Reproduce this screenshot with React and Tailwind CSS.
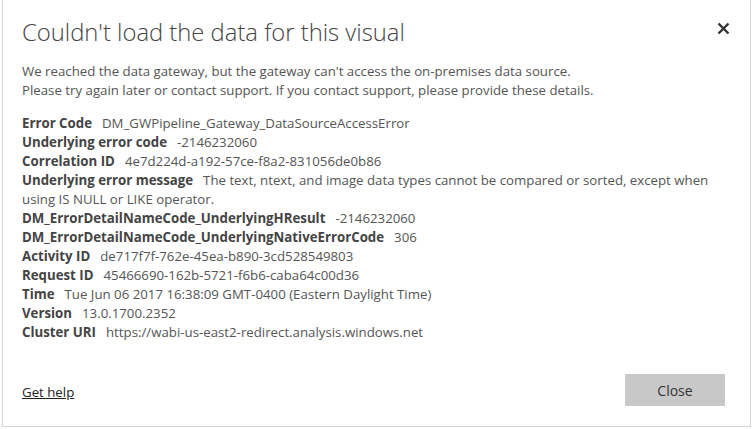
import React from 'react';

const details = [
  ['Error Code', 'DM_GWPipeline_Gateway_DataSourceAccessError'],
  ['Underlying error code', '-2146232060'],
  ['Correlation ID', '4e7d224d-a192-57ce-f8a2-831056de0b86'],
  [
    'Underlying error message',
    'The text, ntext, and image data types cannot be compared or sorted, except when using IS NULL or LIKE operator.',
  ],
  ['DM_ErrorDetailNameCode_UnderlyingHResult', '-2146232060'],
  ['DM_ErrorDetailNameCode_UnderlyingNativeErrorCode', '306'],
  ['Activity ID', 'de717f7f-762e-45ea-b890-3cd528549803'],
  ['Request ID', '45466690-162b-5721-f6b6-caba64c00d36'],
  ['Time', 'Tue Jun 06 2017 16:38:09 GMT-0400 (Eastern Daylight Time)'],
  ['Version', '13.0.1700.2352'],
  ['Cluster URI', 'https://wabi-us-east2-redirect.analysis.windows.net'],
];

const App = () => {
  return (
    <div className="w-[753px] h-[429px] bg-white font-['Open_Sans',sans-serif]">
      <div className="ml-[2px] w-[749px] h-[427px] border-x border-b border-[#d4d4d4] flex flex-col pl-[19px] pr-[25px]">
        {/* Header */}
        <div className="flex items-start justify-between pt-[15px] -mr-[5px]">
          <h1 className="text-[23.8px] leading-[34px] font-light text-[#444]">
            Couldn't load the data for this visual
          </h1>
          <button className="mt-[7px] text-[#333]">
            <svg width="13" height="13" viewBox="0 0 13 13">
              <path d="M1.5 1.5 L11.5 11.5 M11.5 1.5 L1.5 11.5" stroke="currentColor" strokeWidth="2.4" />
            </svg>
          </button>
        </div>

        <p className="mt-[13px] text-[13.25px] leading-[19px] text-[#555]">
          We reached the data gateway, but the gateway can't access the on-premises data source.
          <br />
          Please try again later or contact support. If you contact support, please provide these details.
        </p>

        {/* Details */}
        <div className="mt-[14px] text-[13.25px] leading-[19px] text-[#555] pr-[10px]">
          {details.map(([label, value]) => (
            <div key={label}>
              <span className="font-bold text-[#444]">{label}</span>
              <span className="ml-[10px]">{value}</span>
            </div>
          ))}
        </div>

        {/* Footer */}
        <div className="mt-auto mb-[20px] flex items-center justify-between">
          <a href="#" className="mt-[6px] text-[13.25px] text-[#222] underline">
            Get help
          </a>
          <button className="w-[100px] h-[32px] bg-[#c8c8c8] text-[14px] text-[#333]">
            Close
          </button>
        </div>
      </div>
    </div>
  );
};

export default App;
